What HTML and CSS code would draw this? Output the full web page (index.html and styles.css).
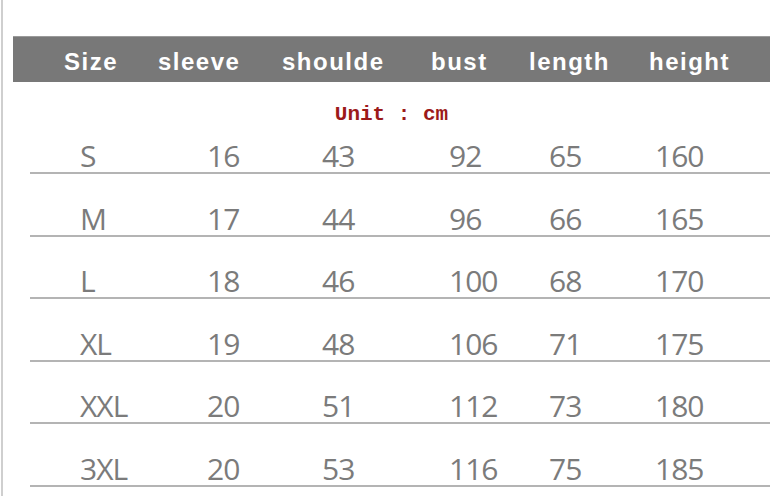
FILE: index.html
```html
<!DOCTYPE html>
<html>
<head>
<meta charset="utf-8">
<link rel="stylesheet" href="styles.css">
</head>
<body>
<div class="frame">
  <div class="chart">
    <div class="head">
      <span>Size</span><span>sleeve</span><span>shoulde</span><span>bust</span><span>length</span><span>height</span>
    </div>
    <div class="unit">Unit : cm</div>
  </div>
  <div class="rows">
    <div class="row"><span>S</span><span>16</span><span>43</span><span>92</span><span>65</span><span>160</span></div>
    <div class="row"><span>M</span><span>17</span><span>44</span><span>96</span><span>66</span><span>165</span></div>
    <div class="row"><span>L</span><span>18</span><span>46</span><span>100</span><span>68</span><span>170</span></div>
    <div class="row"><span>XL</span><span>19</span><span>48</span><span>106</span><span>71</span><span>175</span></div>
    <div class="row"><span>XXL</span><span>20</span><span>51</span><span>112</span><span>73</span><span>180</span></div>
    <div class="row"><span>3XL</span><span>20</span><span>53</span><span>116</span><span>75</span><span>185</span></div>
  </div>
</div>
</body>
</html>
```
FILE: styles.css
```css
html, body {
  margin: 0;
  background: #fff;
}
body {
  padding-left: 1px;
}
.frame {
  border-left: 2px solid #cfcfcf;
  height: 496px;
  box-sizing: border-box;
  overflow: hidden;
}
.chart {
  margin-left: 10px;
  padding-top: 36px;
}
.head {
  height: 46px;
  box-sizing: border-box;
  background: #787878;
  border-top: 1px solid #9a9a9a;
  display: grid;
  grid-template-columns: 94px 124px 149px 98px 120px 1fr;
  padding-left: 51px;
  padding-top: 5px;
  align-items: center;
  color: #fff;
  font-family: "Liberation Sans", Arial, sans-serif;
  font-weight: bold;
  font-size: 24px;
  line-height: 24px;
  letter-spacing: 1.5px;
}
.unit {
  height: 42px;
  box-sizing: border-box;
  padding-top: 22px;
  text-align: center;
  font-family: "Liberation Mono", "Courier New", monospace;
  font-weight: bold;
  font-size: 21px;
  line-height: 21px;
  color: #9c1a1a;
}
.rows {
  margin-left: 27px;
}
.row {
  display: grid;
  grid-template-columns: 127px 115px 127px 100px 106px 1fr;
  padding-left: 50px;
  height: 62.5px;
  box-sizing: border-box;
  border-bottom: 2px solid #b4b4b4;
  align-items: end;
  padding-bottom: 1px;
  font-family: "Open Sans", "Noto Sans", sans-serif;
  font-size: 30px;
  line-height: 30px;
  color: #7b7b7b;
  letter-spacing: -1px;
}
.row:first-child {
  height: 50px;
}
```
